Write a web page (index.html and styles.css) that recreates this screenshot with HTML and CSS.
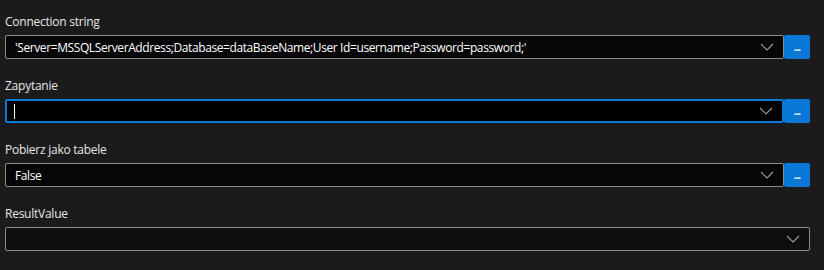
FILE: index.html
```html
<!DOCTYPE html>
<html>
<head>
<meta charset="utf-8">
<link rel="stylesheet" href="styles.css">
</head>
<body>
<div class="form">
  <div class="field">
    <div class="label">Connection string</div>
    <div class="row">
      <div class="select"><span class="value">'Server=MSSQLServerAddress;Database=dataBaseName;User Id=username;Password=password;'</span>
        <svg class="chev" width="14" height="8" viewBox="0 0 14 8"><path d="M1 1 L7 7 L13 1" fill="none" stroke="#9a9a9a" stroke-width="1.2"/></svg>
      </div>
      <div class="btn">...</div>
    </div>
  </div>
  <div class="field">
    <div class="label">Zapytanie</div>
    <div class="row">
      <div class="select focus"><span class="caret"></span>
        <svg class="chev" width="14" height="8" viewBox="0 0 14 8"><path d="M1 1 L7 7 L13 1" fill="none" stroke="#9a9a9a" stroke-width="1.2"/></svg>
      </div>
      <div class="btn">...</div>
    </div>
  </div>
  <div class="field">
    <div class="label">Pobierz jako tabele</div>
    <div class="row">
      <div class="select"><span class="value">False</span>
        <svg class="chev" width="14" height="8" viewBox="0 0 14 8"><path d="M1 1 L7 7 L13 1" fill="none" stroke="#9a9a9a" stroke-width="1.2"/></svg>
      </div>
      <div class="btn">...</div>
    </div>
  </div>
  <div class="field">
    <div class="label">ResultValue</div>
    <div class="row">
      <div class="select empty">
        <svg class="chev" width="14" height="8" viewBox="0 0 14 8"><path d="M1 1 L7 7 L13 1" fill="none" stroke="#9a9a9a" stroke-width="1.2"/></svg>
      </div>
    </div>
  </div>
</div>
</body>
</html>
```
FILE: styles.css
```css
html, body {
  margin: 0;
  padding: 0;
  background: #1b1b1b;
  width: 824px;
  height: 270px;
  overflow: hidden;
  font-family: "Open Sans", "Noto Sans", sans-serif;
  font-size: 12px;
}
.form {
  padding: 14px 0 0 5px;
  width: 805px;
  display: flex;
  flex-direction: column;
  gap: 19px;
}
.label {
  color: #e6e6e6;
  line-height: 16px;
  height: 16px;
  margin-bottom: 5px;
  letter-spacing: -0.25px;
}
.row {
  display: flex;
  height: 24px;
}
.select {
  flex: 1;
  box-sizing: border-box;
  height: 24px;
  border: 1px solid #8c8c8c;
  border-radius: 2px;
  background: #060606;
  display: flex;
  align-items: center;
  padding: 0 9px 0 9px;
  color: #ffffff;
}
.select.focus {
  border: 2px solid #0a78d7;
  background: #000;
  padding-left: 7px;
}
.select.empty {
  background: #0e0e0e;
}
.value {
  flex: 1;
  white-space: nowrap;
  overflow: hidden;
  letter-spacing: -0.4px;
}
.caret {
  width: 1px;
  height: 15px;
  background: #fff;
  margin-right: auto;
}
.chev {
  flex: none;
  margin-left: auto;
}
.btn {
  width: 26px;
  height: 24px;
  background: #0a78d7;
  border-radius: 2px;
  color: #fff;
  font-weight: bold;
  font-size: 11px;
  display: flex;
  align-items: center;
  justify-content: center;
  padding-bottom: 2px;
  box-sizing: border-box;
  letter-spacing: -1px;
}
```
